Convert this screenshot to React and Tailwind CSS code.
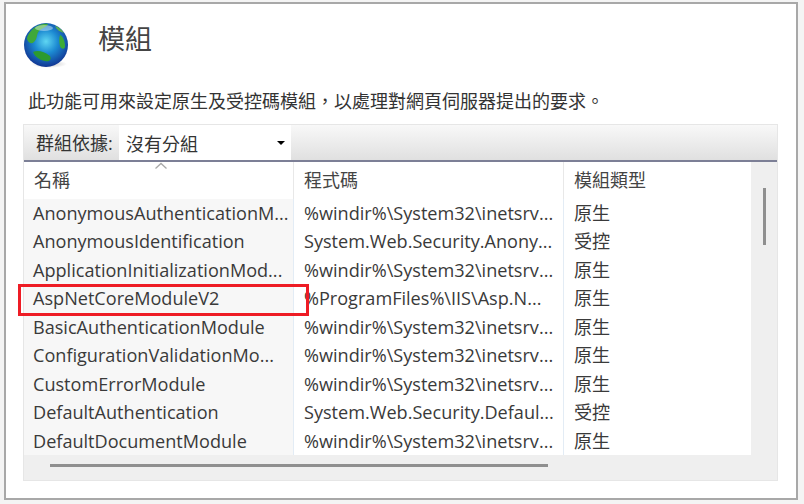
import React from 'react';

const rows = [
  ['AnonymousAuthenticationM...', '%windir%\\System32\\inetsrv...', '原生'],
  ['AnonymousIdentification', 'System.Web.Security.Anony...', '受控'],
  ['ApplicationInitializationMod...', '%windir%\\System32\\inetsrv...', '原生'],
  ['AspNetCoreModuleV2', '%ProgramFiles%\\IIS\\Asp.N...', '原生'],
  ['BasicAuthenticationModule', '%windir%\\System32\\inetsrv...', '原生'],
  ['ConfigurationValidationMo...', '%windir%\\System32\\inetsrv...', '原生'],
  ['CustomErrorModule', '%windir%\\System32\\inetsrv...', '原生'],
  ['DefaultAuthentication', 'System.Web.Security.Defaul...', '受控'],
  ['DefaultDocumentModule', '%windir%\\System32\\inetsrv...', '原生'],
];

const Globe = () => (
  <svg width="46" height="46" viewBox="0 0 46 46">
    <defs>
      <radialGradient id="sea" cx="0.5" cy="0.42" r="0.6">
        <stop offset="0" stopColor="#5fd6f2" />
        <stop offset="0.45" stopColor="#1c8ad2" />
        <stop offset="1" stopColor="#10308f" />
      </radialGradient>
      <radialGradient id="shade" cx="0.5" cy="0.5" r="0.5">
        <stop offset="0" stopColor="#888" stopOpacity="0.5" />
        <stop offset="1" stopColor="#888" stopOpacity="0" />
      </radialGradient>
    </defs>
    <ellipse cx="25" cy="41" rx="18" ry="4" fill="url(#shade)" />
    <circle cx="22" cy="22" r="22" fill="url(#sea)" />
    <path d="M7 8 C12 2 20 0 24 1 C23 4 18 5 15 8 C12 12 14 15 10 19 C8 21 5 21 3 16 C3 13 5 10 7 8 Z" fill="#3fa83a" />
    <path d="M9 29 C13 27 20 28 26 33 C28 37 25 39 21 38 C16 37 11 34 9 29 Z" fill="#2c9a30" />
    <path d="M36 12 C39 13 41 18 41 24 C40 27 37 26 36 23 C35 19 35 15 36 12 Z" fill="#3cab36" />
    <path d="M31 3 C35 4 38 7 40 10 C36 9 33 7 31 3 Z" fill="#5cb050" />
    <ellipse cx="20" cy="5" rx="9" ry="3" fill="#ffffff" opacity="0.4" />
  </svg>
);

export default function App() {
  return (
    <div className="w-[804px] h-[504px] bg-[#f4f4f4] pl-[4px] pr-[6px] pt-[2px] pb-[4px] font-['Open_Sans','Noto_Sans_CJK_TC',sans-serif] text-[#3a3a3a] overflow-hidden">
      <div className="h-full border-2 border-[#a8a8a8] bg-white pl-[17px] pr-[18px] flex flex-col">
        <div className="flex items-start h-[66px]">
          <div className="mt-[19px] ml-[1px]">
            <Globe />
          </div>
          <h1 className="ml-[28px] mt-[21px] text-[27px] leading-[27px] text-[#444]">模組</h1>
        </div>
        <p className="mt-[19px] pl-[5px] text-[18px] leading-[24px] whitespace-nowrap text-[#333]">此功能可用來設定原生及受控碼模組，以處理對網頁伺服器提出的要求。</p>
        <div className="mt-[11px] w-[755px] h-[357px] border border-[#e6e6e6] flex flex-col bg-[#efefef]">
          <div className="flex h-[37px] shrink-0 border-b-2 border-[#7c7f96] bg-gradient-to-b from-[#f8f8f8] to-[#e0e0e0]">
            <span className="w-[95px] pl-[12px] pt-[6px] text-[18px] leading-[24px] whitespace-nowrap text-[#333]">群組依據:</span>
            <div className="w-[172px] flex items-center justify-between bg-white pl-[7px] pr-[6px] text-[18px] text-[#333]">
              <span className="pt-[3px]">沒有分組</span>
              <span className="w-0 h-0 border-x-[4px] border-x-transparent border-t-[4px] border-t-black" />
            </div>
          </div>
          <div className="flex flex-1 min-h-0">
            <div className="relative flex-1 flex flex-col bg-white">
              <svg className="absolute left-[130px] top-[0px]" width="14" height="8" viewBox="0 0 14 8">
                <path d="M1.5 6.5 L7 1.5 L12.5 6.5" fill="none" stroke="#a8a8a8" strokeWidth="1.3" />
              </svg>
              <div className="flex h-[37px] text-[18px] leading-[36px] text-[#444]">
                <div className="w-[270px] pl-[10px] border-r border-[#e8e8e8]">名稱</div>
                <div className="w-[270px] pl-[10px] border-r border-[#e8e8e8]">程式碼</div>
                <div className="pl-[10px]">模組類型</div>
              </div>
              {rows.map(([name, code, type]) => (
                <div key={name} className="flex h-[28.6px] text-[18.1px] leading-[28px] whitespace-nowrap">
                  <div className="w-[270px] pl-[9px] bg-[#f7f7f7] border-r border-[#e3ecf5] overflow-hidden">{name}</div>
                  <div className="w-[270px] pl-[10px] border-r border-[#e3ecf5] overflow-hidden">{code}</div>
                  <div className="pl-[10px]">{type}</div>
                </div>
              ))}
              <div className="absolute left-[-6px] top-[122px] w-[291px] h-[32px] border-[3px] border-[#ee1c25]" />
            </div>
            <div className="w-[26px] shrink-0 pl-[12px] pt-[26px]">
              <div className="w-[3px] h-[57px] bg-[#8f8f8f]" />
            </div>
          </div>
          <div className="h-[25px] shrink-0 pl-[26px] pt-[9px]">
            <div className="w-[498px] h-[3px] bg-[#8f8f8f]" />
          </div>
        </div>
      </div>
    </div>
  );
}
